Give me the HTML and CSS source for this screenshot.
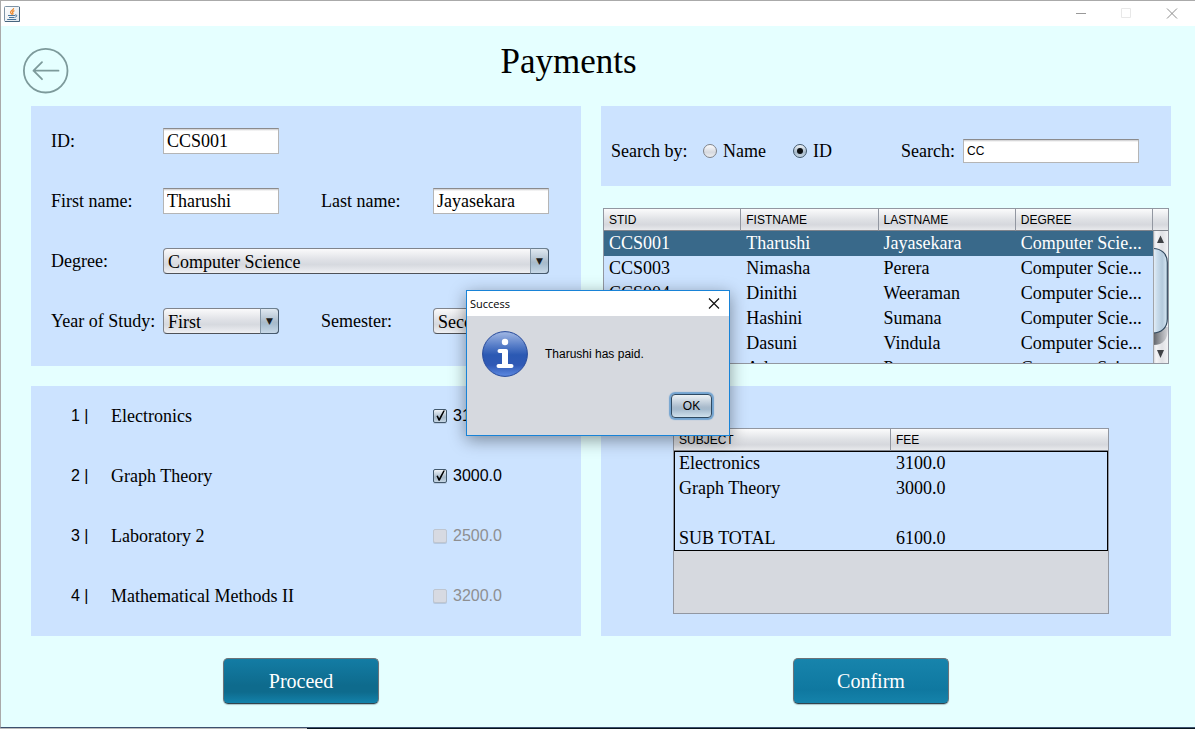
FILE: index.html
```html
<!DOCTYPE html>
<html lang="en">
<head>
<meta charset="utf-8">
<title>Payments</title>
<link rel="stylesheet" href="styles.css">
</head>
<body>
<div class="window">
  <div class="titlebar">
    <svg class="app-icon" viewBox="0 0 16 16" aria-hidden="true">
      <defs><linearGradient id="app" x1="0" y1="0" x2="1" y2="1"><stop offset="0" stop-color="#fff"/><stop offset="1" stop-color="#dfe6ec"/></linearGradient></defs>
      <rect x=".5" y=".5" width="15" height="15" rx="1" fill="url(#app)" stroke="#7d93a6"/>
      <path d="M15.5 1v14.5H1" fill="none" stroke="#47657e"/>
      <path d="M9.6 2.2C10 4 6.400 4.600 6.600 6.400c.1 1 1 1.400 1.300 2.100M10.400 4.600c-2 .8-2.200 1.600-1.500 2.400.5.7 0 1.200-.5 1.600" fill="none" stroke="#ee8322" stroke-width="1.200"/>
      <path d="M4 9.500h7M11 9c2.400-.6 2.300 1.700.2 2.200M5 11.500h5.500M3.200 13.500h9" fill="none" stroke="#49759c" stroke-width="1"/>
    </svg>
    <div class="window-controls">
      <button type="button" aria-label="Minimize"><svg viewBox="0 0 12 12"><path d="M2 5.500h10" stroke="#999"/></svg></button>
      <button type="button" aria-label="Maximize" disabled><svg viewBox="0 0 12 12"><path d="M1.500 .5h9v9h-9z" stroke="#e8e8e8" fill="none"/></svg></button>
      <button type="button" aria-label="Close"><svg viewBox="0 0 12 12"><path d="M1 .5l10 10M11 .5L1 10.500" stroke="#8c8c8c"/></svg></button>
    </div>
  </div>

  <header class="page-header">
    <button class="back" type="button" aria-label="Back">
      <svg viewBox="0 0 46 46"><g fill="none" stroke="#7d9a9b" stroke-width="1.800"><circle cx="22.700" cy="22.700" r="21.800"/><path d="M35.500 22.700H10.500M19 14.200L10.500 22.700l8.500 8.500" stroke-linecap="round" stroke-linejoin="round"/></g></svg>
    </button>
    <h1 class="title">Payments</h1>
  </header>

  <main class="content">
    <form class="panel student-form">
      <label for="sid">ID:</label>
      <input class="field" id="sid" type="text" value="CCS001">
      <label class="row-start" for="first">First name:</label>
      <input class="field" id="first" type="text" value="Tharushi">
      <label class="second" for="last">Last name:</label>
      <input class="field" id="last" type="text" value="Jayasekara">
      <label for="degree">Degree:</label>
      <div class="combo wide"><select id="degree"><option>Computer Science</option></select></div>
      <label for="year">Year of Study:</label>
      <div class="combo"><select id="year"><option>First</option></select></div>
      <label class="second" for="semester">Semester:</label>
      <div class="combo"><select id="semester"><option>Second</option></select></div>
    </form>

    <section class="lookup">
      <div class="panel search-bar">
        <span class="search-by">Search by:</span>
        <label class="choice"><input class="radio" type="radio" name="by">Name</label>
        <label class="choice grow"><input class="radio" type="radio" name="by" checked>ID</label>
        <label class="search-label" for="search">Search:</label>
        <input class="field search-field" id="search" type="text" value="CC">
      </div>
      <div class="results">
        <table class="grid results-table">
          <thead><tr><th>STID</th><th>FISTNAME</th><th>LASTNAME</th><th>DEGREE</th><th class="corner"></th></tr></thead>
          <tbody>
            <tr class="selected"><td>CCS001</td><td>Tharushi</td><td>Jayasekara</td><td>Computer Scie...</td></tr>
            <tr><td>CCS003</td><td>Nimasha</td><td>Perera</td><td>Computer Scie...</td></tr>
            <tr><td>CCS004</td><td>Dinithi</td><td>Weeraman</td><td>Computer Scie...</td></tr>
            <tr><td>CCS005</td><td>Hashini</td><td>Sumana</td><td>Computer Scie...</td></tr>
            <tr><td>CCS006</td><td>Dasuni</td><td>Vindula</td><td>Computer Scie...</td></tr>
            <tr><td>CCS007</td><td>Ada</td><td>Perera</td><td>Computer Scie...</td></tr>
          </tbody>
        </table>
        <svg class="scrollbar" viewBox="0 0 15 132" aria-hidden="true">
          <defs>
            <linearGradient id="btn"><stop offset="0" stop-color="#c8cacf"/><stop offset=".2" stop-color="#f5f5f7"/><stop offset=".6" stop-color="#e0e1e5"/><stop offset="1" stop-color="#f2f3f5"/></linearGradient>
            <linearGradient id="thumb"><stop offset="0" stop-color="#e9f1f8"/><stop offset=".3" stop-color="#c9dcec"/><stop offset=".65" stop-color="#b4cadc"/><stop offset="1" stop-color="#d8e9f5"/></linearGradient>
            <linearGradient id="shade" x1="0" y1="0" x2="1" y2="0"><stop offset="0" stop-color="#5d6066"/><stop offset=".6" stop-color="#a9abb0"/><stop offset="1" stop-color="#d5d6da"/></linearGradient>
          </defs>
          <rect width="15" height="132" fill="url(#btn)"/>
          <path d="M0 96h15c0 12-4 18-15 18z" fill="url(#shade)"/>
          <path d="M0 17.500c8 0 14.300 5 14.300 14V88c0 9-6.300 14-14.300 14z" fill="url(#thumb)"/>
          <path d="M0 17.500c8 0 14.300 5 14.300 14V88c0 9-6.300 14-14.300 14" fill="none" stroke="#30475c" stroke-width="1.200"/>
          <path d="M4 12l3.500-7.500L11 12zM4 119h7l-3.500 8z" fill="#3f4145"/>
          <path d="M.5 0v132" stroke="#a1a4aa"/>
        </svg>
      </div>
    </section>

    <section class="panel subjects">
      <div class="subject"><span class="number">1 |</span><span>Electronics</span><label class="fee"><input class="check" type="checkbox" checked>3100.0</label></div>
      <div class="subject"><span class="number">2 |</span><span>Graph Theory</span><label class="fee"><input class="check" type="checkbox" checked>3000.0</label></div>
      <div class="subject"><span class="number">3 |</span><span>Laboratory 2</span><label class="fee off"><input class="check" type="checkbox" disabled>2500.0</label></div>
      <div class="subject"><span class="number">4 |</span><span>Mathematical Methods II</span><label class="fee off"><input class="check" type="checkbox" disabled>3200.0</label></div>
    </section>

    <section class="panel summary">
      <div class="summary-box">
        <table class="grid fee-table">
          <thead><tr><th>SUBJECT</th><th>FEE</th></tr></thead>
          <tbody>
            <tr><td>Electronics</td><td>3100.0</td></tr>
            <tr><td>Graph Theory</td><td>3000.0</td></tr>
            <tr><td></td><td></td></tr>
            <tr><td>SUB TOTAL</td><td>6100.0</td></tr>
          </tbody>
        </table>
      </div>
    </section>

    <div class="actions"><button class="action pressed" type="button">Proceed</button></div>
    <div class="actions"><button class="action" type="button">Confirm</button></div>
  </main>
</div>
<div class="desktop-edge"></div>

<div class="dialog" role="dialog" aria-labelledby="dialog-title">
  <div class="dialog-bar">
    <span id="dialog-title">Success</span>
    <button class="dialog-close" type="button" aria-label="Close"><svg viewBox="0 0 12 12"><path d="M1 .5l10 10M11 .5L1 10.500" stroke="#111" stroke-width="1.200"/></svg></button>
  </div>
  <div class="dialog-body">
    <svg class="info" viewBox="0 0 46 46" aria-hidden="true">
      <defs><linearGradient id="info" x1="0" y1="0" x2="0" y2="1"><stop offset="0" stop-color="#a3b9e4"/><stop offset=".3" stop-color="#597fc9"/><stop offset=".52" stop-color="#2b59b3"/><stop offset=".75" stop-color="#3059b5"/><stop offset="1" stop-color="#5d8ae2"/></linearGradient></defs>
      <circle cx="23" cy="23" r="22.400" fill="url(#info)" stroke="#274a9a"/>
      <circle cx="23" cy="11" r="3.200" fill="#fff"/>
      <path d="M17.500 18h6.700a1.800 1.800 0 0 1 1.800 1.800V33h3.500a2 2 0 0 1 0 4h-13a2 2 0 0 1 0-4H20V22h-2.500a2 2 0 0 1 0-4z" fill="#fff"/>
    </svg>
    <p class="message">Tharushi has paid.</p>
    <button class="ok" type="button">OK</button>
  </div>
</div>
</body>
</html>
```
FILE: styles.css
```css
* { box-sizing: border-box; }

body {
  margin: 0;
  min-height: 100vh;
  display: flex;
  flex-direction: column;
  background: #fff;
  color: #000;
  font: 18px/26px "Liberation Serif", "Times New Roman", serif;
}

button, input, select { font: inherit; color: inherit; margin: 0; }
button { padding: 0; border: 0; background: none; }
svg { display: block; }

.window {
  flex: 1;
  background: #e5ffff;
  border-top: 1px solid #aaa;
  border-left: 1px solid #aaa;
  border-bottom: 1px solid #3c506e;
}

.desktop-edge { height: 1px; background: linear-gradient(to right, #bbb 307px, #05141c 307px); }

.titlebar {
  display: flex;
  justify-content: space-between;
  align-items: center;
  height: 25px;
  padding-left: 3px;
  background: #fff;
}
.app-icon { width: 16px; height: 16px; }
.window-controls { display: flex; }
.window-controls button { display: flex; justify-content: center; align-items: center; width: 46px; height: 25px; }
.window-controls svg, .dialog-close svg { width: 12px; height: 12px; }

.page-header {
  display: grid;
  grid-template-columns: 46px 1fr;
  height: 80px;
  padding: 16px 127px 12px 22px;
}
.back { align-self: end; height: 46px; }
.title { margin: 0; font-size: 35px; line-height: 40px; font-weight: normal; text-align: center; }

.content {
  display: grid;
  grid-template-columns: 550fr 570fr;
  gap: 20px;
  padding: 0 24px 23px 30px;
}

.panel { background: #cce3ff; }

.student-form {
  display: grid;
  grid-template-columns: 112px 1fr 154px 1fr;
  gap: 34px 0;
  align-content: start;
  padding: 22px 32px 32px 20px;
}
.row-start { grid-column-start: 1; }
.second { padding-left: 42px; }
.wide { grid-column: span 3; }

.field {
  width: 100%;
  min-width: 0;
  height: 26px;
  padding: 0 3px;
  border: 1px solid #b5b5b5;
  border-top-color: #8b8b8d;
  border-radius: 0;
  background: linear-gradient(#c9c9cb, #fff 2px);
}

.combo { position: relative; }
.combo select {
  display: block;
  appearance: none;
  width: 100%;
  height: 26px;
  padding: 0 20px 0 4px;
  border: 1px solid #80848c;
  border-bottom-color: #4f5258;
  border-radius: 4px;
  background: linear-gradient(#fafafb, #dfe1e6 45%, #d6d9df 65%, #eff0f3);
}
.combo::after {
  content: "▼";
  position: absolute;
  inset: 0 0 0 auto;
  width: 17px;
  border: 1px solid #465a6e;
  border-left-color: #8497a8;
  border-top-color: #6d8090;
  border-radius: 0 4px 4px 0;
  background: linear-gradient(#e0e9f1, #a9bbcb 55%, #a9bfd1 65%, #c8d9e8);
  color: #1b1d20;
  font: 9px/24px "DejaVu Sans", sans-serif;
  text-align: center;
  pointer-events: none;
}

.lookup { display: flex; flex-direction: column; gap: 22px; }
.search-bar { display: flex; align-items: center; padding: 32px 32px 22px 10px; }
.search-by { width: 92px; }
.choice { display: flex; align-items: center; gap: 6px; width: 90px; }
.grow { flex: 1; }
.search-label { width: 62px; }
.search-field { width: 176px; height: 24px; font: 12px/20px "Liberation Sans", Arial, sans-serif; }

.radio, .check {
  appearance: none;
  position: relative;
  flex: none;
  width: 14px;
  height: 14px;
  border: 1px solid #7f8288;
  background: linear-gradient(#fcfcfd, #d6d9df 60%, #eceef1);
}
.radio { border-radius: 50%; }
.radio:checked, .check:checked { border-color: #42586c; background: linear-gradient(#f0f4f8, #a7bacb 60%, #c5d6e4); }
.radio:checked::before { content: ""; position: absolute; inset: 3px; border-radius: 50%; background: #0c0f12; }
.check { border-radius: 2px; box-shadow: 0 1px 0 #b5c9e2; }
.check:checked::before {
  content: "";
  position: absolute;
  inset: 0;
  background: #000;
  clip-path: polygon(20% 50%, 32% 45%, 43% 68%, 78% 5%, 91% 5%, 48% 90%, 38% 90%);
}
.check:disabled { border-color: #bfc6d0; background: #d7dae2; }

.results {
  display: grid;
  height: 156px;
  margin: 0 2px;
  overflow: hidden;
  border: 1px solid #9297a1;
}
.grid { width: 100%; table-layout: fixed; border-collapse: separate; border-spacing: 0; background: #cce3ff; }
.results-table, .scrollbar { grid-area: 1 / 1; align-self: start; }
.scrollbar { justify-self: end; width: 15px; height: 132px; margin-top: 22px; }
.grid th {
  height: 22px;
  padding: 0 5px;
  border-right: 1px solid #9297a1;
  border-bottom: 1px solid #80848c;
  background: linear-gradient(#fbfbfc, #dfe1e5 50%, #d6d8dd 75%, #e8e9ec);
  font: 12px/20px "Liberation Sans", Arial, sans-serif;
  text-align: left;
}
.grid th:last-child { border-right: 0; }
.grid .corner { width: 15px; padding: 0; }
.grid td { height: 25px; padding: 0 5px; line-height: 25px; white-space: nowrap; }
.selected td { background: #39698a; color: #fff; }

.subject { display: grid; grid-template-columns: 40px 1fr 148px; align-items: center; height: 60px; padding-left: 40px; }
.subjects { padding-bottom: 10px; }
.number, .fee { font: 16px/20px "Liberation Sans", Arial, sans-serif; }
.fee { display: flex; align-items: center; gap: 6px; }
.off { color: #8e8f91; }

.summary { display: grid; padding: 42px 62px 22px 72px; }
.summary-box { border: 1px solid #9297a1; background: #d6d9df; }
.fee-table tbody { outline: 1px solid #000; outline-offset: -1px; }

.actions { padding: 2px 0 0 192px; }
.action {
  width: 156px;
  height: 46px;
  border: 1px solid #6c7378;
  border-bottom-color: #32444e;
  border-radius: 5px;
  background: linear-gradient(#1784ac, #0f78a0 70%, #1583ab);
  box-shadow: 0 1px 1px #a9c4c8;
  color: #fff;
  font-size: 20px;
}
.pressed { background: linear-gradient(#137ca4, #0e6b8d 60%, #0e6b8d 75%, #1382ab); }

.dialog {
  position: absolute;
  left: 466px;
  top: 290px;
  width: 264px;
  border: 1px solid #1883d7;
  background: #d6d9df;
  box-shadow: 0 4px 16px rgba(0, 0, 0, .4);
  font: 12px/16px "Liberation Sans", Arial, sans-serif;
}
.dialog-bar {
  display: flex;
  justify-content: space-between;
  align-items: center;
  height: 25px;
  padding: 0 9px 0 3px;
  background: #fff;
  font: 11px/16px "Open Sans", "Noto Sans", sans-serif;
}
.dialog-body {
  display: grid;
  grid-template-columns: 46px 1fr;
  gap: 17px;
  align-items: center;
  padding: 15px 17px 17px 15px;
}
.info { width: 46px; height: 46px; }
.message { margin: 0; }
.ok {
  grid-column: 2;
  justify-self: end;
  width: 41px;
  height: 24px;
  border: 1px solid #2f4a62;
  border-radius: 4px;
  background: linear-gradient(#edf2f6, #a9bbcc 55%, #a5bacd 65%, #cfe0ec);
  box-shadow: 0 0 0 1px #73a4d1, 0 0 1px 2px #73a4d1;
}
```
